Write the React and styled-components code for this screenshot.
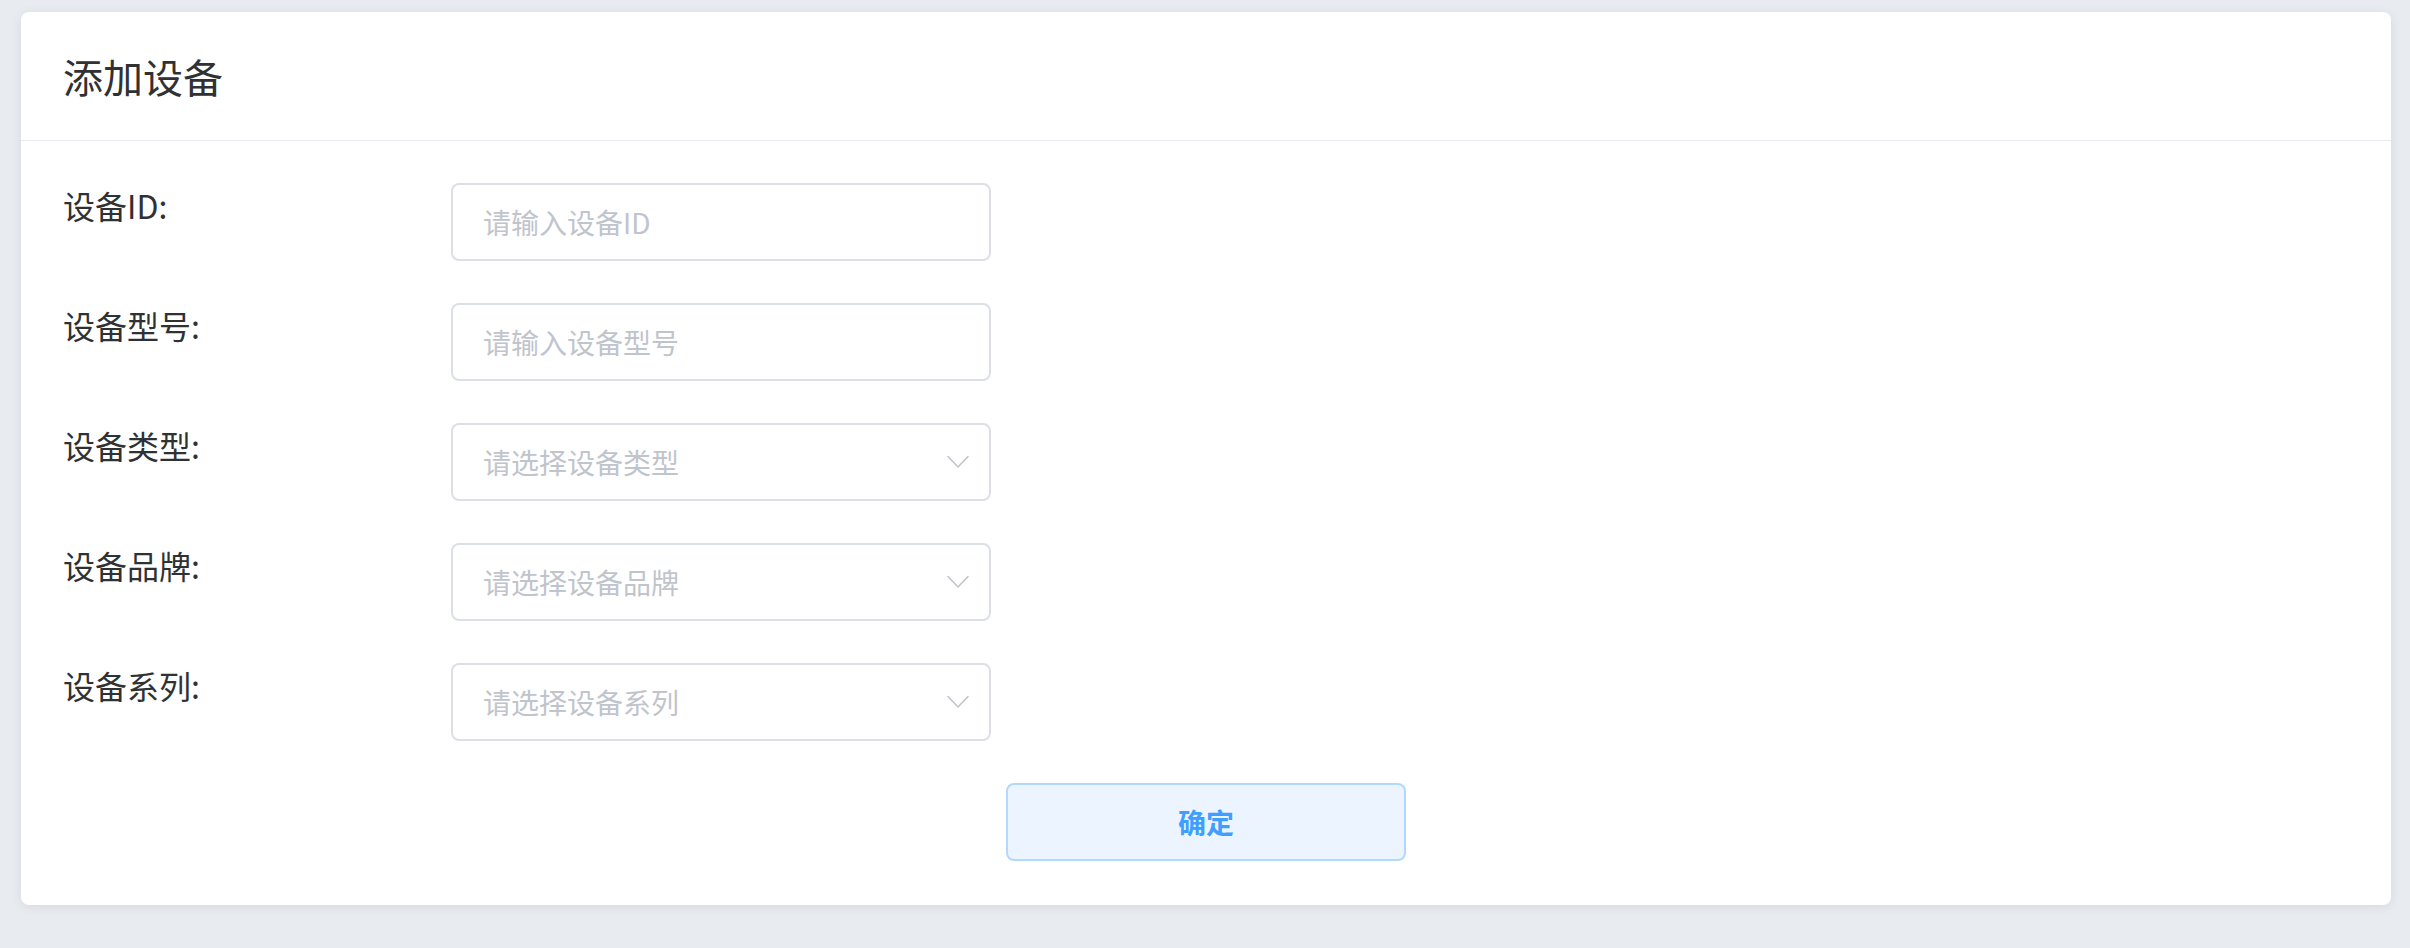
import React from "react"
import styled, { createGlobalStyle } from "styled-components"

const GlobalStyle = createGlobalStyle`
	html, body {
		margin: 0;
		padding: 0;
		background: #e8ebef;
		font-family: "Noto Sans CJK SC", "Noto Sans", "Liberation Sans", sans-serif;
	}
	* {
		box-sizing: border-box;
	}
`

const Page = styled.div`
	width: 2410px;
	height: 948px;
	padding: 12px 19px 0 21px;
`

const Card = styled.div`
	background: #fff;
	border-radius: 8px;
	box-shadow: 0 2px 12px rgba(0, 0, 0, 0.08);
	overflow: hidden;
`

const Header = styled.div`
	height: 129px;
	display: flex;
	align-items: center;
	padding: 0 42px;
	border-bottom: 1px solid #e6e9ee;
`

const Title = styled.h2`
	margin: 0;
	font-size: 40px;
	font-weight: normal;
	color: #303133;
	line-height: 1;
`

const Body = styled.form`
	display: flex;
	flex-direction: column;
	gap: 42px;
	padding: 42px 42px 44px;
`

const Row = styled.div`
	display: flex;
	align-items: flex-start;
`

const Label = styled.label`
	width: 388px;
	flex-shrink: 0;
	font-size: 32px;
	line-height: 44px;
	color: #303133;
`

const Field = styled.div`
	position: relative;
	width: 540px;
	height: 78px;
`

const Input = styled.input`
	width: 100%;
	height: 100%;
	border: 2px solid #dcdfe6;
	border-radius: 8px;
	padding: 0 ${(p) => (p.$select ? "70px" : "30px")} 0 30px;
	font-family: inherit;
	font-size: 28px;
	color: #606266;
	background: #fff;
	outline: none;
	cursor: ${(p) => (p.$select ? "pointer" : "text")};

	&::placeholder {
		color: #c0c4cc;
	}
`

const Arrow = styled.span`
	position: absolute;
	right: 22px;
	top: 50%;
	transform: translateY(-50%);
	display: flex;
	pointer-events: none;
`

const Actions = styled.div`
	display: flex;
	justify-content: center;
`

const Button = styled.button`
	width: 400px;
	height: 78px;
	background: #ecf5ff;
	border: 2px solid #b3d8ff;
	border-radius: 8px;
	color: #409eff;
	font-family: inherit;
	font-size: 28px;
	font-weight: bold;
	cursor: pointer;
`

const fields = [
	{ label: "设备ID:", placeholder: "请输入设备ID" },
	{ label: "设备型号:", placeholder: "请输入设备型号" },
	{ label: "设备类型:", placeholder: "请选择设备类型", select: true },
	{ label: "设备品牌:", placeholder: "请选择设备品牌", select: true },
	{ label: "设备系列:", placeholder: "请选择设备系列", select: true },
]

const Chevron = () => (
	<svg width="22" height="13" viewBox="0 0 22 13" fill="none">
		<polyline points="1,1 11,11.5 21,1" stroke="#c0c4cc" strokeWidth="1.6" strokeLinecap="round" strokeLinejoin="round" />
	</svg>
)

export default function App() {
	return (
		<Page>
			<GlobalStyle />
			<Card>
				<Header>
					<Title>添加设备</Title>
				</Header>
				<Body onSubmit={(e) => e.preventDefault()}>
					{fields.map((f) => (
						<Row key={f.label}>
							<Label>{f.label}</Label>
							<Field>
								<Input placeholder={f.placeholder} readOnly={f.select} $select={f.select} />
								{f.select && (
									<Arrow>
										<Chevron />
									</Arrow>
								)}
							</Field>
						</Row>
					))}
					<Actions>
						<Button type="submit">确定</Button>
					</Actions>
				</Body>
			</Card>
		</Page>
	)
}
